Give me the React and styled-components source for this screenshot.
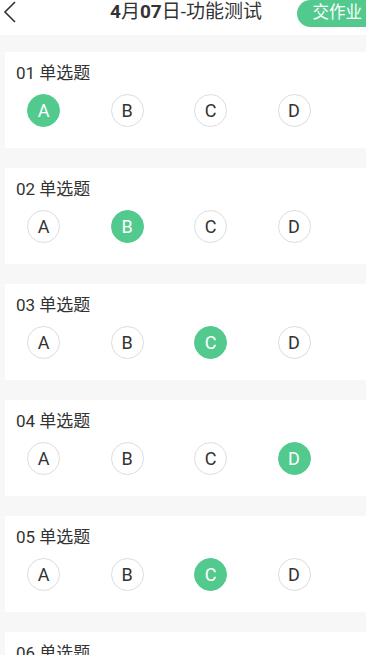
import React from "react";
import styled, { createGlobalStyle } from "styled-components";

const GREEN = "#52ca8e";

const GlobalStyle = createGlobalStyle`
    html, body {
        margin: 0;
        padding: 0;
        background: #f7f7f7;
        font-family: Roboto, "Noto Sans CJK SC", sans-serif;
        overflow: hidden;
    }
`;

const questions = [
    { no: "01", answer: "A" },
    { no: "02", answer: "B" },
    { no: "03", answer: "C" },
    { no: "04", answer: "D" },
    { no: "05", answer: "C" },
    { no: "06", answer: "A" },
];

const options = ["A", "B", "C", "D"];

const App = () => {
    return (
        <Page>
            <GlobalStyle />
            <Header>
                <Back>
                    <svg width="14" height="22" viewBox="0 0 14 22">
                        <path d="M12 1 L2 11 L12 21" fill="none" stroke="#333" strokeWidth="1.6" />
                    </svg>
                </Back>
                <Title>
                    <b>4</b>月<b>07</b>日-功能测试
                </Title>
                <Submit>交作业</Submit>
            </Header>

            <List>
                {questions.map((q) => (
                    <Card key={q.no}>
                        <QTitle>{q.no} 单选题</QTitle>
                        <OptionRow>
                            {options.map((o) => (
                                <Option key={o} active={o === q.answer}>
                                    {o}
                                </Option>
                            ))}
                        </OptionRow>
                    </Card>
                ))}
            </List>
        </Page>
    );
};

export default App;

const Page = styled.div`
    width: 366px;
    height: 655px;
    overflow: hidden;
`;

const Header = styled.div`
    position: relative;
    height: 35px;
    background: #fff;
    display: flex;
    justify-content: center;
`;

const Back = styled.div`
    position: absolute;
    left: 3px;
    top: 1px;
`;

const Title = styled.div`
    margin-left: 6px;
    font-size: 19px;
    line-height: 24px;
    color: #333;

    b {
        font-weight: 700;
    }
`;

const Submit = styled.div`
    position: absolute;
    right: -14px;
    top: 0;
    height: 27px;
    padding: 0 18px 0 16px;
    border-radius: 14px;
    background: ${GREEN};
    color: #fff;
    font-size: 16.5px;
    line-height: 25px;
`;

const List = styled.div`
    padding: 17px 0 0 5px;
    display: flex;
    flex-direction: column;
    gap: 20px;
`;

const Card = styled.div`
    height: 96px;
    background: #fff;
    padding: 10px 0 0 11px;
    box-sizing: border-box;
`;

const QTitle = styled.div`
    font-size: 17px;
    line-height: 23px;
    color: #333;
`;

const OptionRow = styled.div`
    display: flex;
    gap: 50.5px;
    padding: 9px 0 0 11px;
`;

const Option = styled.div`
    width: 33px;
    height: 33px;
    box-sizing: border-box;
    border-radius: 50%;
    border: 1px solid ${(p) => (p.active ? GREEN : "#dcdcdc")};
    background: ${(p) => (p.active ? GREEN : "#fff")};
    color: ${(p) => (p.active ? "#fff" : "#333")};
    display: flex;
    align-items: center;
    justify-content: center;
    font-size: 18px;
`;
